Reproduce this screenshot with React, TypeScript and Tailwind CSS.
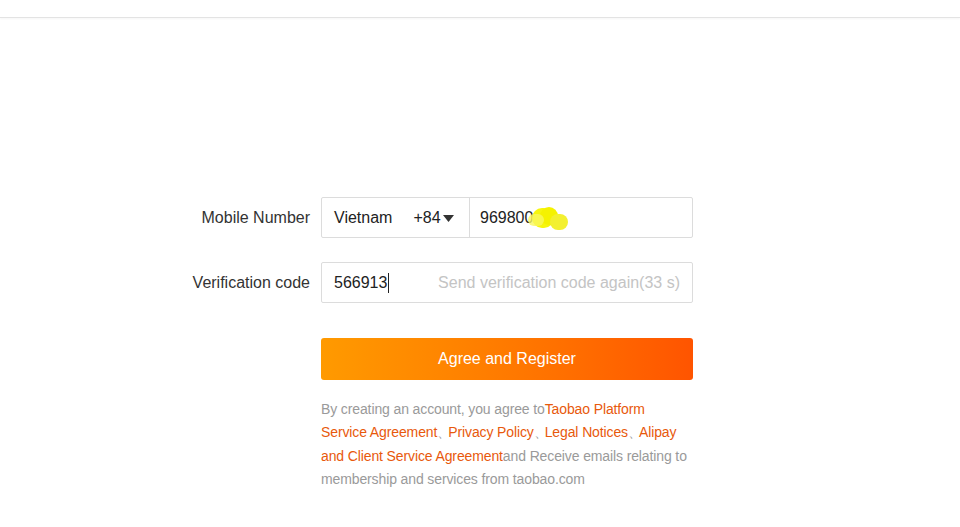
import React from "react";

export default function App() {
  const font = { fontFamily: '"Liberation Sans", Arial, sans-serif' };
  return (
    <div className="w-[960px] h-[527px] bg-white overflow-hidden" style={font}>
      <div className="h-[18px] border-b border-[#e3e3e3] shadow-[0_1px_2px_rgba(0,0,0,0.04)]" />
      <div className="pt-[179px] pl-[190px]">
        {/* Row 1 */}
        <div className="flex items-center gap-[11px]">
          <div className="w-[120px] whitespace-nowrap text-right text-[16px] text-[#333]">Mobile Number</div>
          <div className="flex w-[372px] h-[41px] border border-[#dcdcdc] rounded-[2px]">
            <div className="w-[148px] flex items-center pl-[12px] border-r border-[#dcdcdc] text-[16px] text-[#222]">
              <span>Vietnam</span>
              <span className="ml-[21px]">+84</span>
              <svg width="11" height="7" viewBox="0 0 11 7" className="ml-[2px] mt-[1px]">
                <path d="M0 0 L11 0 L5.5 7 Z" fill="#333" />
              </svg>
            </div>
            <div className="relative flex-1 flex items-center pl-[10px] text-[16px] text-[#222]">
              <span>969800</span>
              <span className="absolute left-[62px] top-[10px] w-[22px] h-[20px] rounded-full bg-[#f7f500] opacity-95" />
              <span className="absolute left-[70px] top-[9px] w-[18px] h-[18px] rounded-full bg-[#f5f200]" />
              <span className="absolute left-[58px] top-[16px] w-[16px] h-[12px] rounded-full bg-[#f9f760] opacity-80" />
              <span className="absolute left-[80px] top-[16px] w-[18px] h-[16px] rounded-full bg-[#f3f030]" />
            </div>
          </div>
        </div>
        {/* Row 2 */}
        <div className="flex items-center gap-[11px] mt-[24px]">
          <div className="w-[120px] whitespace-nowrap text-right text-[16px] text-[#333]">Verification code</div>
          <div className="flex items-center justify-between w-[372px] h-[41px] border border-[#dcdcdc] rounded-[2px] pl-[12px] pr-[12px]">
            <div className="flex items-center text-[16px] text-[#222]">
              <span>566913</span>
              <span className="inline-block w-[1px] h-[20px] bg-[#222] ml-[1px]" />
            </div>
            <span className="text-[16px] text-[#c4c4c4]">Send verification code again(33 s)</span>
          </div>
        </div>
        {/* Button */}
        <div className="ml-[131px] mt-[35px] w-[372px]">
          <button className="w-full h-[42px] rounded-[3px] bg-gradient-to-r from-[#ff9a00] to-[#ff5400] text-white text-[16px]">
            Agree and Register
          </button>
          <p className="mt-[18px] text-[14px] leading-[23.3px] tracking-[-0.12px] text-[#9a9a9a]">
            By creating an account, you agree to<span className="text-[#e8590c]">Taobao Platform Service Agreement</span>
            <span className="inline-block w-[11px] text-center">{"、"}</span>
            <span className="text-[#e8590c]">Privacy Policy</span>
            <span className="inline-block w-[11px] text-center">{"、"}</span>
            <span className="text-[#e8590c]">Legal Notices</span>
            <span className="inline-block w-[11px] text-center">{"、"}</span>
            <span className="text-[#e8590c]">Alipay and Client Service Agreement</span>and Receive emails relating to
            membership and services from taobao.com
          </p>
        </div>
      </div>
    </div>
  );
}
